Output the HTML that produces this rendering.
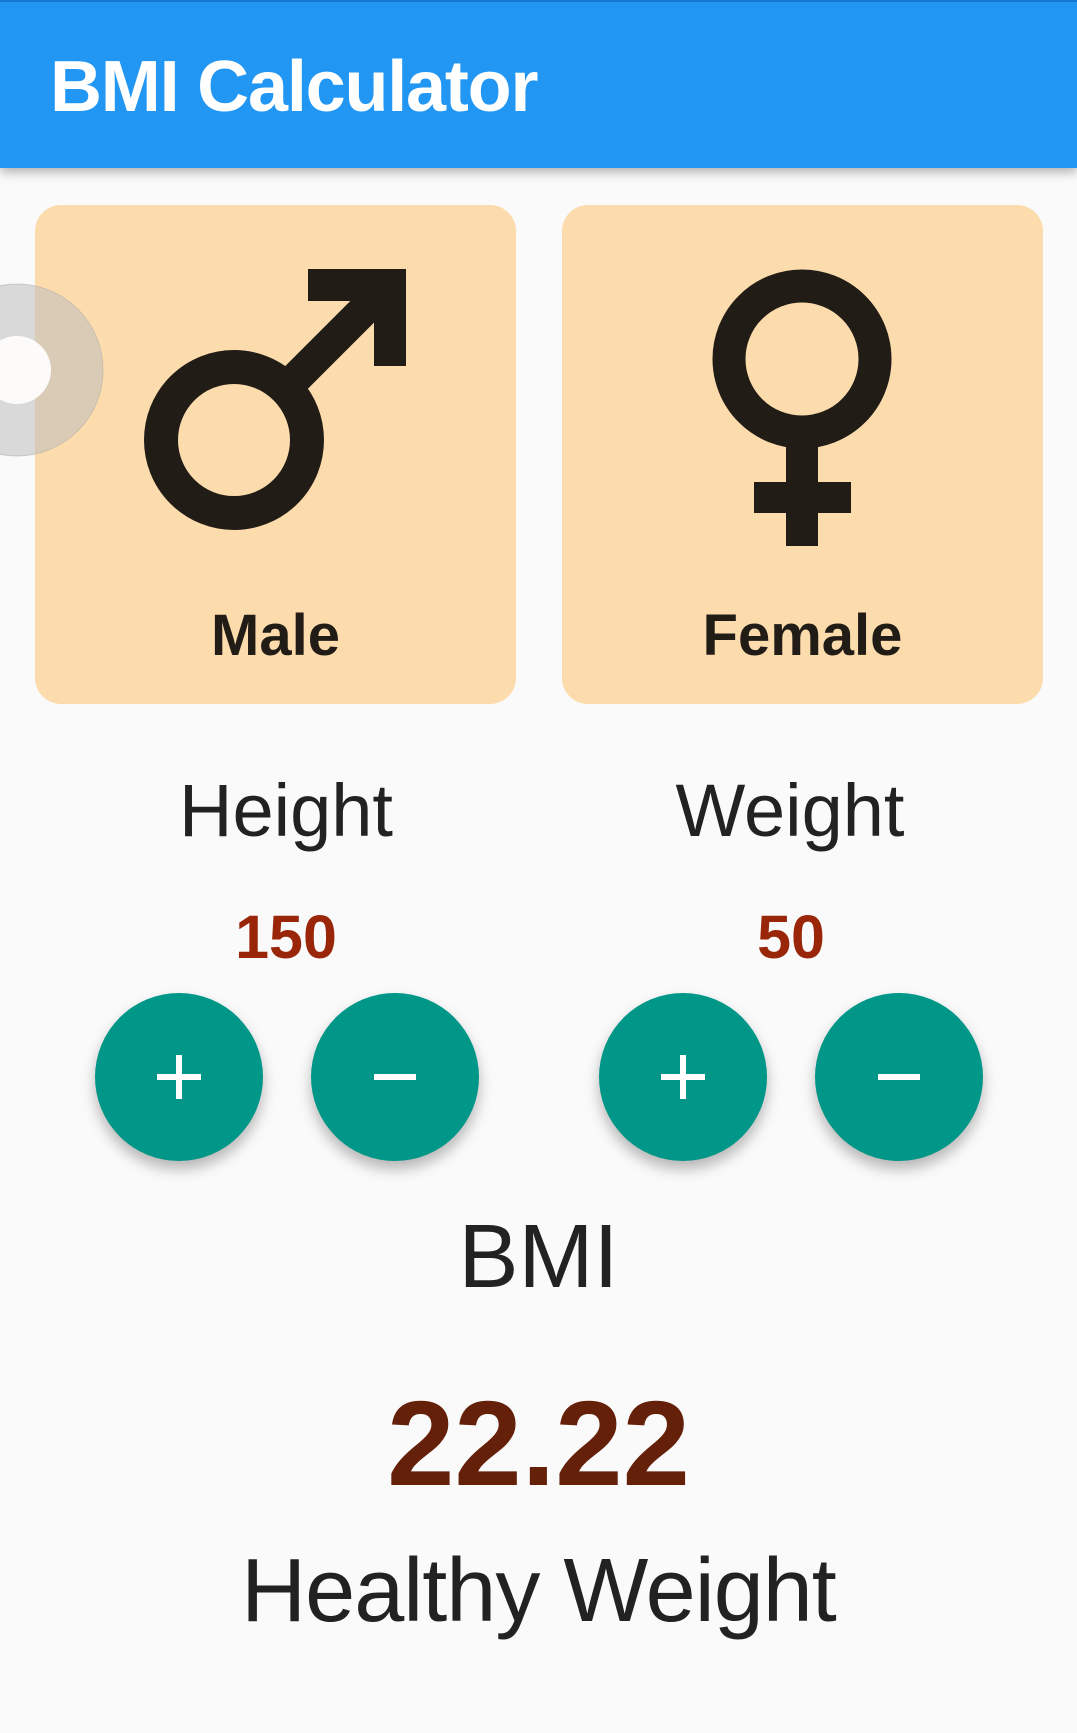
<!DOCTYPE html>
<html><head><meta charset="utf-8"><style>
html,body{margin:0;padding:0;}
body{width:1077px;height:1733px;background:#fafafa;position:relative;overflow:hidden;font-family:"Liberation Sans",sans-serif;}
.t{position:absolute;line-height:1;white-space:nowrap;text-align:center;}
.bar{position:absolute;left:0;top:0;width:1077px;height:168px;background:#2196F3;border-top:2px solid #1976D2;box-sizing:border-box;box-shadow:0 4px 10px rgba(0,0,0,0.3);z-index:2}
.card{position:absolute;top:205px;width:481px;height:499px;background:#FCDCAD;border-radius:26px;}
.btn{position:absolute;top:993px;width:168px;height:168px;border-radius:50%;background:#009688;box-shadow:0 8px 14px rgba(0,0,0,0.28);}
.btn svg{position:absolute;left:0;top:0}
</style></head><body>
<div class="bar"><div class="t" style="left:50px;top:49px;font-size:72px;font-weight:bold;color:#fff;letter-spacing:-1.2px;text-align:left">BMI Calculator</div></div>

<div class="card" style="left:35px"></div>
<div class="card" style="left:562px"></div>

<svg width="1077" height="720" style="position:absolute;left:0;top:0">
  <g fill="none" stroke="#221c16">
    <circle cx="234" cy="440" r="73" stroke-width="34"/>
    <line x1="291" y1="383" x2="385" y2="289" stroke-width="32"/>
    <circle cx="802" cy="359" r="73" stroke-width="33"/>
  </g>
  <g fill="#221c16">
    <polygon points="308,269 406,269 406,366 374,366 374,301 308,301"/>
    <rect x="786" y="440" width="32" height="106"/>
    <rect x="754" y="482" width="97" height="31"/>
  </g>
  <circle cx="17" cy="370" r="86" fill="rgba(190,190,190,0.55)" stroke="rgba(170,170,170,0.5)" stroke-width="1"/>
  <circle cx="17" cy="370" r="34" fill="#fcfbfa"/>
</svg>

<div class="t" style="left:35px;width:481px;top:607px;font-size:58px;font-weight:bold;color:#221c16">Male</div>
<div class="t" style="left:562px;width:481px;top:607px;font-size:58px;font-weight:bold;color:#221c16">Female</div>

<div class="t" style="left:136px;width:300px;top:774px;font-size:74px;color:#222">Height</div>
<div class="t" style="left:640px;width:300px;top:774px;font-size:74px;color:#222">Weight</div>

<div class="t" style="left:186px;width:200px;top:907px;font-size:61px;font-weight:bold;color:#992608">150</div>
<div class="t" style="left:691px;width:200px;top:907px;font-size:61px;font-weight:bold;color:#992608">50</div>

<div class="btn" style="left:95px"><svg width="168" height="168"><path d="M62 84H106M84 62V106" stroke="#fff" stroke-width="6"/></svg></div>
<div class="btn" style="left:311px"><svg width="168" height="168"><path d="M63 84H105" stroke="#fff" stroke-width="6"/></svg></div>
<div class="btn" style="left:599px"><svg width="168" height="168"><path d="M62 84H106M84 62V106" stroke="#fff" stroke-width="6"/></svg></div>
<div class="btn" style="left:815px"><svg width="168" height="168"><path d="M63 84H105" stroke="#fff" stroke-width="6"/></svg></div>

<div class="t" style="left:0;width:1077px;top:1212px;font-size:90px;color:#222">BMI</div>
<div class="t" style="left:0;width:1077px;top:1383px;font-size:121px;font-weight:bold;color:#65200a">22.22</div>
<div class="t" style="left:0;width:1077px;top:1546px;font-size:90px;color:#222;letter-spacing:-1px">Healthy Weight</div>
</body></html>
